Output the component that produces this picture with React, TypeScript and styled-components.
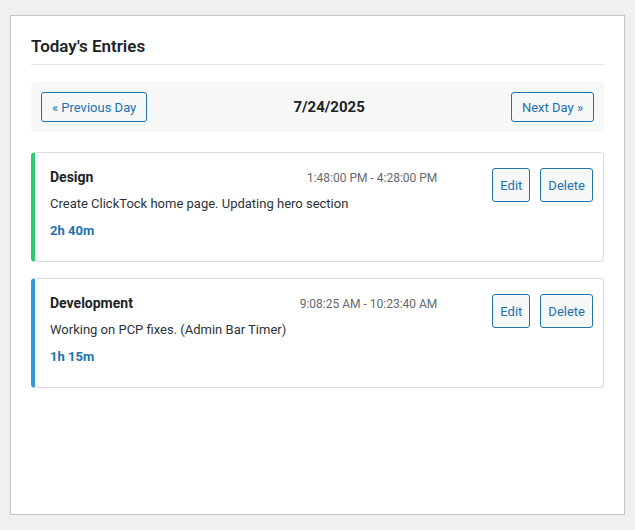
import React from "react";
import styled, { createGlobalStyle } from "styled-components";

const GlobalStyle = createGlobalStyle`
  html, body {
    margin: 0;
    padding: 0;
    background: #f0f0f1;
  }
  body {
    font-family: "Segoe UI", Roboto, "Noto Sans", sans-serif;
    font-size: 13px;
    color: #1d2327;
  }
`;

const Panel = styled.div`
  box-sizing: border-box;
  margin: 15px 10px 0;
  height: 500px;
  padding: 19px 20px 20px;
  background: #fff;
  border: 1px solid #c3c4c7;
  box-shadow: 0 1px 1px rgba(0, 0, 0, 0.04);
`;

const Title = styled.h2`
  margin: 0;
  padding-bottom: 7px;
  font-size: 17px;
  font-weight: 600;
  line-height: 22px;
  color: #1d2327;
  border-bottom: 1px solid #e5e5e5;
`;

const DayNav = styled.div`
  display: flex;
  align-items: center;
  justify-content: space-between;
  margin-top: 17px;
  padding: 10px;
  background: #f6f7f7;
  border-radius: 4px;
`;

const Button = styled.button<{ $tall?: boolean }>`
  box-sizing: border-box;
  height: ${(p) => (p.$tall ? "34px" : "30px")};
  padding: 0 ${(p) => (p.$tall ? "7px" : "10px")};
  font-family: inherit;
  font-size: 13px;
  line-height: 1;
  color: #2271b1;
  background: #f6f7f7;
  border: 1px solid #2271b1;
  border-radius: 3px;
  white-space: nowrap;
  cursor: pointer;
`;

const CurrentDate = styled.strong`
  font-size: 15px;
  font-weight: 700;
  color: #1d2327;
`;

const EntryList = styled.div`
  display: flex;
  flex-direction: column;
  gap: 16px;
  margin-top: 20px;
`;

const EntryCard = styled.div<{ $accent: string }>`
  display: flex;
  align-items: flex-start;
  padding: 15px 10px 15px 15px;
  background: #fff;
  border: 1px solid #dcdcde;
  border-left: 4px solid ${(p) => p.$accent};
  border-radius: 4px;
`;

const EntryBody = styled.div`
  flex: 1;
  margin-right: 55px;
`;

const EntryHead = styled.div`
  display: flex;
  align-items: baseline;
  justify-content: space-between;
  line-height: 18px;
`;

const Project = styled.span`
  font-size: 14px;
  font-weight: 700;
  color: #1d2327;
`;

const TimeRange = styled.span`
  font-size: 12px;
  color: #646970;
`;

const Description = styled.p`
  margin: 7px 0 0;
  font-size: 13px;
  line-height: 20px;
  color: #2c3338;
`;

const Duration = styled.div`
  margin: 8px 0 6px;
  font-size: 13px;
  font-weight: 700;
  line-height: 18px;
  color: #2271b1;
`;

const Actions = styled.div`
  display: flex;
  gap: 10px;
`;

type Entry = {
  id: number;
  project: string;
  start: string;
  end: string;
  description: string;
  duration: string;
  color: string;
};

const entries: Entry[] = [
  {
    id: 1,
    project: "Design",
    start: "1:48:00 PM",
    end: "4:28:00 PM",
    description: "Create ClickTock home page. Updating hero section",
    duration: "2h 40m",
    color: "#2ecc71",
  },
  {
    id: 2,
    project: "Development",
    start: "9:08:25 AM",
    end: "10:23:40 AM",
    description: "Working on PCP fixes. (Admin Bar Timer)",
    duration: "1h 15m",
    color: "#3498db",
  },
];

const App = () => {
  return (
    <>
      <GlobalStyle />
      <Panel>
        <Title>Today's Entries</Title>
        <DayNav>
          <Button>« Previous Day</Button>
          <CurrentDate>7/24/2025</CurrentDate>
          <Button>Next Day »</Button>
        </DayNav>
        <EntryList>
          {entries.map((entry) => (
            <EntryCard key={entry.id} $accent={entry.color}>
              <EntryBody>
                <EntryHead>
                  <Project>{entry.project}</Project>
                  <TimeRange>
                    {entry.start} - {entry.end}
                  </TimeRange>
                </EntryHead>
                <Description>{entry.description}</Description>
                <Duration>{entry.duration}</Duration>
              </EntryBody>
              <Actions>
                <Button $tall>Edit</Button>
                <Button $tall>Delete</Button>
              </Actions>
            </EntryCard>
          ))}
        </EntryList>
      </Panel>
    </>
  );
};

export default App;
